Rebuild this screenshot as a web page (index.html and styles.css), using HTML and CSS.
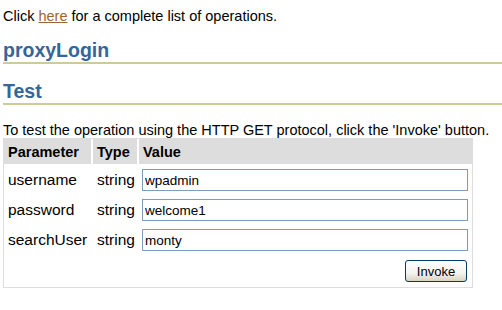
FILE: index.html
```html
<!DOCTYPE html>
<html lang="en">
<head>
    <meta charset="UTF-8">
    <title>proxyLogin - Test</title>
    <link rel="stylesheet" href="styles.css">
</head>
<body>
    <p class="intro">Click <a href="#">here</a> for a complete list of operations.</p>

    <h2 class="op-title">proxyLogin</h2>
    <h3 class="op-section">Test</h3>

    <p class="hint">To test the operation using the HTTP GET protocol, click the 'Invoke' button.</p>

    <form class="test-form" action="#" method="GET">
        <table class="param-table">
            <colgroup>
                <col class="col-name">
                <col class="col-type">
                <col class="col-value">
            </colgroup>
            <tr>
                <th>Parameter</th>
                <th>Type</th>
                <th>Value</th>
            </tr>
            <tr>
                <td>username</td>
                <td>string</td>
                <td><input class="param-input" type="text" name="username" value="wpadmin"></td>
            </tr>
            <tr>
                <td>password</td>
                <td>string</td>
                <td><input class="param-input" type="text" name="password" value="welcome1"></td>
            </tr>
            <tr>
                <td>searchUser</td>
                <td>string</td>
                <td><input class="param-input" type="text" name="searchUser" value="monty"></td>
            </tr>
            <tr>
                <td></td>
                <td></td>
                <td class="actions"><button class="invoke-button" type="submit">Invoke</button></td>
            </tr>
        </table>
    </form>
</body>
</html>
```

FILE: styles.css
```css
* {
    box-sizing: border-box;
}

body {
    margin: 0;
    padding: 6px 0 0 3px;
    font-family: "Liberation Sans", Arial, sans-serif;
    font-size: 14.5px;
    color: #000000;
    background: #FFFFFF;
}

.intro {
    margin: 0;
    line-height: 20px;
}

.intro a {
    color: #996633;
}

.op-title,
.op-section {
    margin: 0;
    font-size: 19.5px;
    font-weight: bold;
    line-height: 23px;
    color: #336699;
    border-bottom: 2px solid #CCCC99;
}

.op-title {
    margin-top: 13px;
}

.op-section {
    margin-top: 16px;
}

.hint {
    margin: 17px 0 0;
    line-height: 16px;
}

.test-form {
    margin: 0;
}

.param-table {
    width: 470px;
    table-layout: fixed;
    border: 1px solid #DDDDDD;
    border-spacing: 0;
    font-size: 15.5px;
}

.col-name {
    width: 87px;
}

.col-type {
    width: 46px;
}

.param-table th {
    height: 25px;
    padding: 0 4px;
    background: #DDDDDD;
    font-size: 14.5px;
    text-align: left;
    vertical-align: middle;
}

.param-table th + th {
    border-left: 2px solid #FFFFFF;
}

.param-table td {
    padding: 5px 4px 3px;
    vertical-align: middle;
    white-space: nowrap;
}

.param-table td + td {
    padding-left: 6px;
}

.param-table td:last-child {
    padding: 5px 4px 3px 5px;
}

.param-input {
    display: block;
    width: 326px;
    height: 22px;
    padding: 0 2px;
    border: 1px solid #7F9DB9;
    font-family: "Liberation Sans", Arial, sans-serif;
    font-size: 13.5px;
    color: #000000;
}

.param-table td.actions {
    padding: 6px 5px 5px 4px;
    text-align: right;
}

.invoke-button {
    width: 62px;
    height: 22px;
    padding: 0;
    border: 1px solid #003C74;
    border-radius: 3px;
    background: linear-gradient(#FFFFFF, #F4F3EE 60%, #D8D2C2);
    font-family: "Liberation Sans", Arial, sans-serif;
    font-size: 13px;
    color: #000000;
}
```
